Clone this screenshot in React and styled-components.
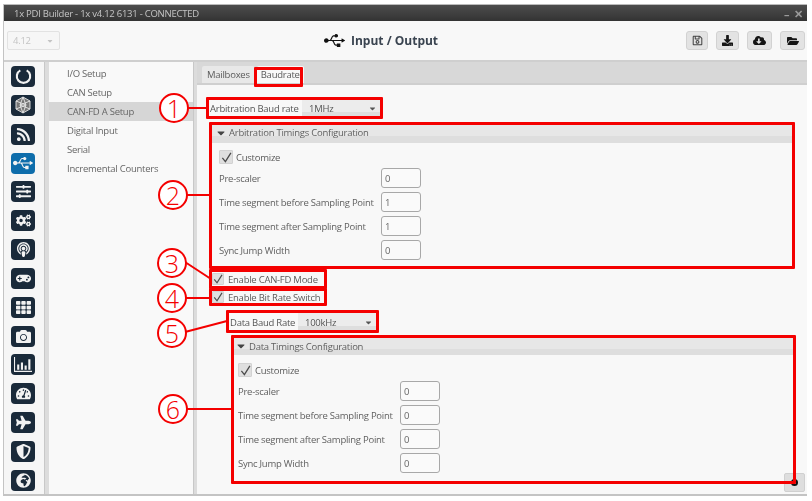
import React from "react";
import styled, { createGlobalStyle } from "styled-components";
import {
  FaRss, FaUsb, FaSlidersH, FaCogs, FaPodcast, FaGamepad, FaTh, FaCamera, FaTachometerAlt,
  FaPlane, FaShieldAlt, FaGlobeAfrica, FaRegSave, FaDownload, FaCloudDownloadAlt, FaFolderOpen, FaCaretDown,
} from "react-icons/fa";

const Global = createGlobalStyle`
  html, body { margin: 0; padding: 0; background: #fff; }
  body { font-family: "Open Sans", "Noto Sans", sans-serif; font-size: 9.5px; letter-spacing: -0.25px; color: #5a5a5a; white-space: nowrap; }
`;

const Page = styled.div`position: relative; width: 812px; height: 501px; overflow: hidden; background: #fff;`;
const Window = styled.div`
  position: relative; margin: 4px 0 0 3px; width: 804px; height: 492px; display: flex; flex-direction: column;
  background: #f8f8f8; border-bottom: 2px solid #c4c4c4; border-left: 1px solid #c4c4c4; box-sizing: border-box; filter: blur(0.3px);
`;
const TitleBar = styled.div`
  height: 17px; flex: none; display: flex; align-items: center; justify-content: space-between; padding: 0 4px 0 10px;
  background: linear-gradient(#4c4c4c, #3e3e3e 60%, #333); color: #c4c4c4; font-size: 9.5px;
  border-top: 1px solid #bbb; box-sizing: border-box;
`;
const WinButtons = styled.div`display: flex; gap: 5px; color: #9a9a9a; font-weight: 700; font-size: 11px; line-height: 1;`;
const Toolbar = styled.div`
  height: 41px; flex: none; position: relative; display: flex; align-items: center; justify-content: space-between;
  padding: 0 2px 0 3px; background: #f8f8f8; border-bottom: 2px solid #cfcfcf; box-sizing: border-box;
`;
const VersionCombo = styled.div`
  width: 53px; height: 19px; border: 1px solid #e2e2e2; border-radius: 2px; display: flex; align-items: center;
  justify-content: space-between; padding: 0 5px; box-sizing: border-box; color: #c4c4c4; font-size: 9.5px; background: #f6f6f6;
`;
const Heading = styled.div`
  position: absolute; left: 320px; top: 8px; display: flex; align-items: center; gap: 6px; color: #3a4450;
  font-weight: 700; font-size: 12px; height: 22px; letter-spacing: 0;
`;
const ToolButtons = styled.div`display: flex; gap: 8px; align-items: center;`;
const ToolButton = styled.div`
  width: ${(p) => p.$w}px; height: 19px; background: #e3e3e3; border: 1px solid #d2d2d2; border-radius: 3px;
  display: flex; align-items: center; justify-content: center; color: ${(p) => p.$c || "#151515"}; box-sizing: border-box; font-size: 11px;
`;
const Body = styled.div`flex: 1; display: flex; min-height: 0;`;
const Sidebar = styled.div`
  width: 40px; flex: none; padding: 4px 0 0 7px; box-sizing: border-box; display: flex; flex-direction: column; gap: 7.85px; background: #f6f6f6;
`;
const NavIcon = styled.div`
  width: 24px; height: 21px; border-radius: 4px; flex: none; display: flex; align-items: center; justify-content: center;
  background: ${(p) => (p.$active ? "#0e6dab" : "#1a2a3a")}; color: #f2f2f2; font-size: ${(p) => (p.$active ? 20 : 15)}px;
`;
const Gutter = styled.div`width: ${(p) => p.$w}px; flex: none; background: #dcdcdc; border-left: 1px solid #c8c8c8; box-sizing: border-box;`;
const MenuList = styled.div`width: 144px; flex: none; padding-top: 2px; background: #f9f9f9; box-sizing: border-box;`;
const MenuItem = styled.div`
  height: 19px; display: flex; align-items: center; padding-left: 18px; color: #666;
  background: ${(p) => (p.$active ? "#d6d6d6" : "transparent")};
`;
const Pane = styled.div`flex: 1; display: flex; flex-direction: column; min-width: 0; background: #f8f8f8;`;
const TabBar = styled.div`
  height: 23px; flex: none; background: #d8d8d8; border-bottom: 2px solid #cfcfcf; display: flex; align-items: flex-end;
  gap: 2px; padding-left: 5px; box-sizing: border-box;
`;
const Tab = styled.div`
  height: 17px; padding: 0 ${(p) => (p.$active ? 4 : 5)}px; display: flex; align-items: center; border-radius: 2px 2px 0 0; color: #5a5a5a;
  background: ${(p) => (p.$active ? "#f8f8f8" : "#e8e8e8")}; font-size: 9.5px;
`;
const Content = styled.div`padding: 13px 12px 0 12px; display: flex; flex-direction: column; flex: 1; min-height: 0;`;
const ComboRow = styled.div`height: 20px; flex: none; display: flex; align-items: center; margin: ${(p) => p.$top || 0}px 0 0 ${(p) => p.$left}px;`;
const ComboLabel = styled.div`width: ${(p) => p.$w}px; flex: none; color: #555;`;
const Combo = styled.div`
  width: 78px; height: 20px; display: flex; align-items: center; justify-content: space-between; padding: 0 3px 0 7px;
  box-sizing: border-box; background: linear-gradient(#ececec 70%, #dedede 70%); color: #555; font-size: 9.5px;
`;
const Section = styled.section`
  margin: ${(p) => p.$top}px 0 0 ${(p) => p.$left}px; flex: none; display: flex; flex-direction: column;
`;
const SectionHead = styled.div`
  height: ${(p) => p.$h}px; display: flex; align-items: center; gap: 2px; padding-left: ${(p) => p.$pad}px; color: #5f5f5f; box-sizing: border-box;
  background: linear-gradient(#e7e7e7 65%, #dedede 65%);
`;
const SectionBody = styled.div`padding: ${(p) => p.$top}px 0 0 ${(p) => p.$pad}px; display: flex; flex-direction: column; gap: 4px;`;
const CheckRow = styled.label`
  display: flex; align-items: center; gap: ${(p) => p.$gap}px; height: ${(p) => p.$h}px; color: #5a5a5a;
  margin: ${(p) => p.$top || 0}px 0 0 ${(p) => p.$left || 0}px;
`;
const CheckBox = styled.span`
  width: ${(p) => p.$s}px; height: ${(p) => p.$s}px; flex: none; background: #dfdfdf; border: 1px solid #d2d2d2; border-radius: 1px;
  display: flex; align-items: center; justify-content: center; box-sizing: border-box;
`;
const FieldRow = styled.div`display: flex; align-items: center; height: 20px;`;
const FieldLabel = styled.div`width: 162px; flex: none; color: #5f5f5f;`;
const FieldInput = styled.div`
  width: 40px; height: 20px; border: 1px solid #a8a8a8; border-radius: 3px; background: #fafafa; display: flex; align-items: center;
  padding-left: 3px; box-sizing: border-box; color: #666;
`;
const CornerButton = styled.div`
  position: absolute; left: 780px; top: 469px; width: 21px; height: 19px; background: #dedede; border: 1px solid #d0d0d0; border-radius: 2px;
  display: flex; align-items: center; justify-content: center; box-sizing: border-box;
`;
const Dot = styled.span`width: 7px; height: 7px; border-radius: 50%; border: 2px solid #111; box-sizing: border-box;`;

/* annotation layer drawn over the screenshot */
const LineLayer = styled.svg`position: absolute; left: 0; top: 0; width: 812px; height: 501px; pointer-events: none;`;
const Mark = styled.div`
  position: absolute; left: ${(p) => p.$x}px; top: ${(p) => p.$y}px; width: ${(p) => p.$w}px; height: ${(p) => p.$h}px;
  border: 3px solid #f40000; box-sizing: border-box; border-radius: 1px;
`;
const Bubble = styled.div`
  position: absolute; left: ${(p) => p.$x - 15}px; top: ${(p) => p.$y - 15}px; width: 30px; height: 30px; border: 2px solid #f40000; border-radius: 50%;
  box-sizing: border-box; display: flex; align-items: center; justify-content: center; color: #f40000; background: #fff;
  font-family: "Open Sans", sans-serif; font-weight: 300; font-size: 25px; line-height: 1; letter-spacing: 0;
`;

const Tick = ({ s }) => (
  <svg width={s} height={s} viewBox="0 0 12 12"><path d="M1.500 6.500L4.800 10.500L10.800 1" fill="none" stroke="#4a4a4a" strokeWidth="1.400" /></svg>
);
const Ring = () => (
  <svg width="17" height="17" viewBox="0 0 16 16"><path d="M5 2.200A6.300 6.300 0 1 0 11 2.200" fill="none" stroke="#f2f2f2" strokeWidth="2" /></svg>
);
const Hex = () => (
  <svg width="18" height="18" viewBox="0 0 18 18" fill="none" stroke="#e8e8e8" strokeWidth="0.9">
    <path d="M9 1l7 4v8l-7 4-7-4V5z" fill="#777" />
    <path d="M9 1l3 8-3 8-3-8zM2 5l10 4-10 4M16 5L6 9l10 4" />
  </svg>
);
const Bars = () => (
  <svg width="18" height="17" viewBox="0 0 17 16" fill="#f2f2f2">
    <path d="M0 1h1v13h16v1H0z" /><path d="M3 8h2v5H3zM6.500 6h2v7h-2zM10 9h2v4h-2zM13.500 3h2v10h-2z" />
  </svg>
);

const navIcons = [<Ring />, <Hex />, <FaRss />, <FaUsb />, <FaSlidersH />, <FaCogs />, <FaPodcast />, <FaGamepad />, <FaTh />, <FaCamera />, <Bars />, <FaTachometerAlt />, <FaPlane />, <FaShieldAlt />, <FaGlobeAfrica />];
const menu = ["I/O Setup", "CAN Setup", "CAN-FD A Setup", "Digital Input", "Serial", "Incremental Counters"];
const timings = (values) => [
  ["Pre-scaler", values[0]],
  ["Time segment before Sampling Point", values[1]],
  ["Time segment after Sampling Point", values[2]],
  ["Sync Jump Width", values[3]],
];
const marks = [
  [254, 67, 49, 20], [206, 97, 177, 22], [209, 122, 586, 147], [209, 269, 118, 20], [209, 288, 118, 18], [226, 310, 153, 23], [231, 335, 565, 149],
];
const bubbles = [[174, 108, 1], [173, 195, 2], [172, 263, 3], [172, 298, 4], [172, 333, 5], [173, 409, 6]];
const lines = [
  [188, 108, 207, 108], [187, 195, 210, 195], [185, 262, 211, 279], [186, 298, 210, 298], [185, 332, 227, 321], [187, 409, 232, 409],
];

function Timings({ title, values, headPad, bodyPad, bodyTop, headH, top, left }) {
  return (
    <Section $top={top} $left={left}>
      <SectionHead $pad={headPad} $h={headH}><FaCaretDown size={12} color="#444" />{title}</SectionHead>
      <SectionBody $pad={bodyPad} $top={bodyTop}>
        <CheckRow $gap={3} $h={14}><CheckBox $s={14}><Tick s={11} /></CheckBox>Customize</CheckRow>
        {timings(values).map(([label, value]) => (
          <FieldRow key={label}><FieldLabel>{label}</FieldLabel><FieldInput>{value}</FieldInput></FieldRow>
        ))}
      </SectionBody>
    </Section>
  );
}

export default function App() {
  return (
    <Page>
      <Global />
      <Window>
        <TitleBar><span>1x PDI Builder - 1x v4.12 6131 - CONNECTED</span><WinButtons><span>–</span><span>✕</span></WinButtons></TitleBar>
        <Toolbar>
          <VersionCombo>4.12<FaCaretDown size={8} /></VersionCombo>
          <Heading><FaUsb size={21} color="#111" />Input / Output</Heading>
          <ToolButtons>
            <ToolButton $w={22} $c="#444"><FaRegSave /></ToolButton>
            <ToolButton $w={23}><FaDownload /></ToolButton>
            <ToolButton $w={25}><FaCloudDownloadAlt size={13} /></ToolButton>
            <ToolButton $w={25}><FaFolderOpen size={12} /></ToolButton>
          </ToolButtons>
        </Toolbar>
        <Body>
          <Sidebar>{navIcons.map((icon, i) => <NavIcon key={i} $active={i === 3}>{icon}</NavIcon>)}</Sidebar>
          <Gutter $w={5} />
          <MenuList>{menu.map((m, i) => <MenuItem key={m} $active={i === 2}>{m}</MenuItem>)}</MenuList>
          <Gutter $w={4} />
          <Pane>
            <TabBar><Tab>Mailboxes</Tab><Tab $active>Baudrate</Tab></TabBar>
            <Content>
              <ComboRow $left={1}><ComboLabel $w={92}>Arbitration Baud rate</ComboLabel><Combo>1MHz<FaCaretDown size={9} /></Combo></ComboRow>
              <Timings title="Arbitration Timings Configuration" values={[0, 1, 1, 0]} headPad={6} bodyPad={10} bodyTop={7} headH={21} top={4} left={0} />
              <CheckRow $gap={4} $h={18} $left={3} $top={10}><CheckBox $s={12}><Tick s={10} /></CheckBox>Enable CAN-FD Mode</CheckRow>
              <CheckRow $gap={4} $h={18} $left={3}><CheckBox $s={12}><Tick s={10} /></CheckBox>Enable Bit Rate Switch</CheckRow>
              <ComboRow $left={21} $top={6}><ComboLabel $w={68}>Data Baud Rate</ComboLabel><Combo>100kHz<FaCaretDown size={9} /></Combo></ComboRow>
              <Timings title="Data Timings Configuration" values={[0, 0, 0, 0]} headPad={3} bodyPad={6} bodyTop={8} headH={18} top={5} left={23} />
            </Content>
          </Pane>
        </Body>
        <CornerButton><Dot /></CornerButton>
      </Window>
      <LineLayer viewBox="0 0 812 501">
        {lines.map(([a, b, c, d], i) => <line key={i} x1={a} y1={b} x2={c} y2={d} stroke="#f40000" strokeWidth="2" />)}
      </LineLayer>
      {marks.map(([x, y, w, h], i) => <Mark key={i} $x={x} $y={y} $w={w} $h={h} />)}
      {bubbles.map(([x, y, n]) => <Bubble key={n} $x={x} $y={y}>{n}</Bubble>)}
    </Page>
  );
}
